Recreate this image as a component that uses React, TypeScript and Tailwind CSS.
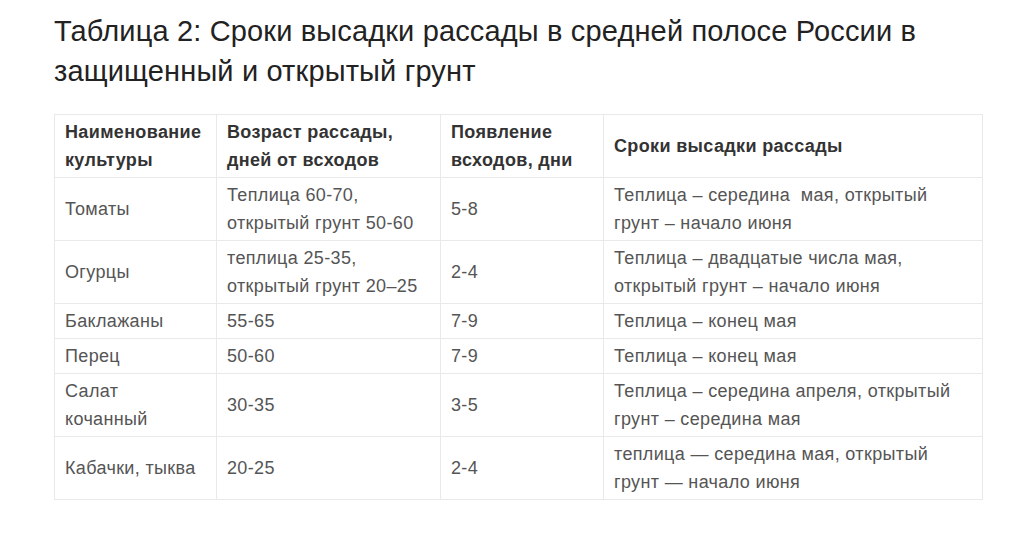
import React from "react";

const rows: [string, string, string, string][] = [
  ["Томаты", "Теплица 60-70, открытый грунт 50-60", "5-8", "Теплица – середина  мая, открытый грунт – начало июня"],
  ["Огурцы", "теплица 25-35, открытый грунт 20–25", "2-4", "Теплица – двадцатые числа мая, открытый грунт – начало июня"],
  ["Баклажаны", "55-65", "7-9", "Теплица – конец мая"],
  ["Перец", "50-60", "7-9", "Теплица – конец мая"],
  ["Салат\nкочанный", "30-35", "3-5", "Теплица – середина апреля, открытый грунт – середина мая"],
  ["Кабачки, тыква", "20-25", "2-4", "теплица — середина мая, открытый грунт — начало июня"],
];

export default function App() {
  return (
    <div className="w-[1035px] h-[550px] bg-white" style={{ fontFamily: '"Liberation Sans", Arial, sans-serif' }}>
      <div className="pl-[54px] pt-[11px]">
        <h1 className="text-[29px] leading-[40px] tracking-[0.15px] text-[#222] font-normal w-[890px]">
          Таблица 2: Сроки высадки рассады в средней полосе России в защищенный и открытый грунт
        </h1>
        <table className="mt-[23px] border-collapse text-[18px] leading-[28px] tracking-[0.35px] text-[#555] w-[928px] table-fixed">
          <colgroup>
            <col className="w-[162px]" />
            <col className="w-[224px]" />
            <col className="w-[163px]" />
            <col className="w-[379px]" />
          </colgroup>
          <thead>
            <tr>
              {["Наименование культуры", "Возраст рассады, дней от всходов", "Появление всходов, дни", "Сроки высадки рассады"].map((h, i) => (
                <th key={i} className="border border-[#e9e9e9] px-[10px] py-[3px] text-left font-bold text-[#333] align-middle">
                  {h}
                </th>
              ))}
            </tr>
          </thead>
          <tbody>
            {rows.map((r, i) => (
              <tr key={i}>
                {r.map((c, j) => (
                  <td key={j} className="border border-[#e9e9e9] px-[10px] py-[3px] align-middle whitespace-pre-wrap">
                    {c}
                  </td>
                ))}
              </tr>
            ))}
          </tbody>
        </table>
      </div>
    </div>
  );
}
